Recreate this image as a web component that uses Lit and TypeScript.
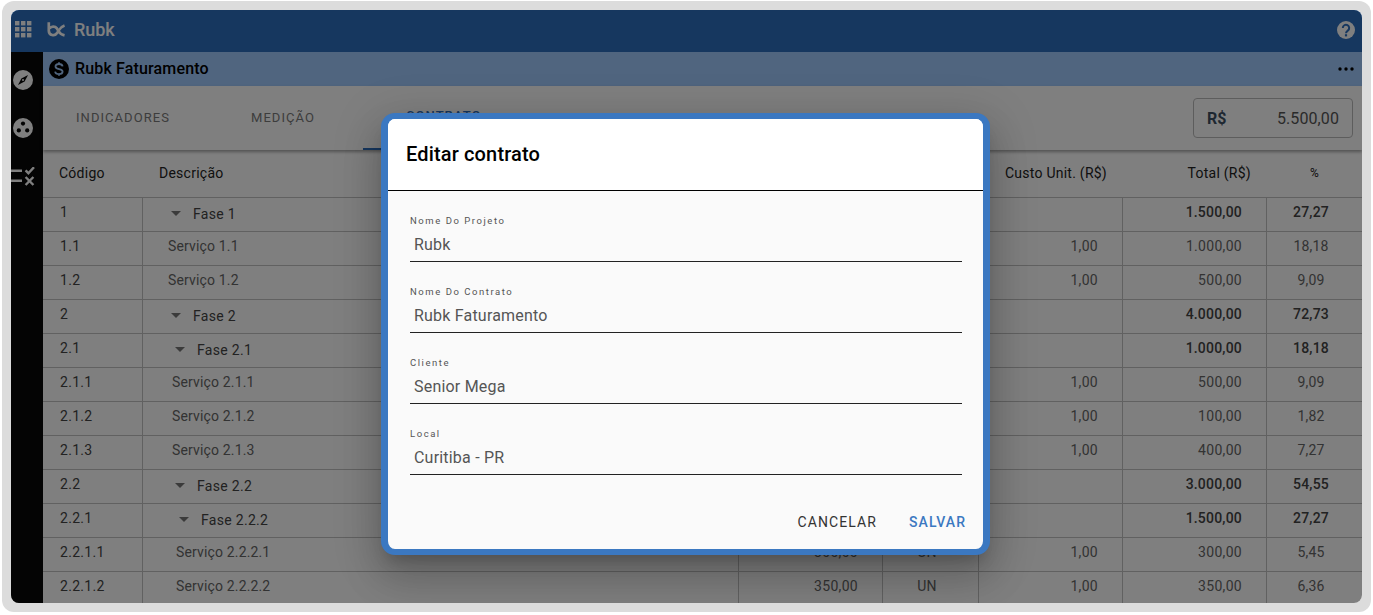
import { LitElement, html, css, svg } from "lit";
import { customElement } from "lit/decorators.js";

type Row = { c: string; d: string; lvl: number; fase: boolean; q?: string; u?: string; cu?: string; t: string; p: string };

const rows: Row[] = [
  { c: "1", d: "Fase 1", lvl: 0, fase: true, t: "1.500,00", p: "27,27" },
  { c: "1.1", d: "Serviço 1.1", lvl: 0, fase: false, q: "1.000,00", u: "UN", cu: "1,00", t: "1.000,00", p: "18,18" },
  { c: "1.2", d: "Serviço 1.2", lvl: 0, fase: false, q: "500,00", u: "UN", cu: "1,00", t: "500,00", p: "9,09" },
  { c: "2", d: "Fase 2", lvl: 0, fase: true, t: "4.000,00", p: "72,73" },
  { c: "2.1", d: "Fase 2.1", lvl: 1, fase: true, t: "1.000,00", p: "18,18" },
  { c: "2.1.1", d: "Serviço 2.1.1", lvl: 1, fase: false, q: "500,00", u: "UN", cu: "1,00", t: "500,00", p: "9,09" },
  { c: "2.1.2", d: "Serviço 2.1.2", lvl: 1, fase: false, q: "100,00", u: "UN", cu: "1,00", t: "100,00", p: "1,82" },
  { c: "2.1.3", d: "Serviço 2.1.3", lvl: 1, fase: false, q: "400,00", u: "UN", cu: "1,00", t: "400,00", p: "7,27" },
  { c: "2.2", d: "Fase 2.2", lvl: 1, fase: true, t: "3.000,00", p: "54,55" },
  { c: "2.2.1", d: "Fase 2.2.2", lvl: 2, fase: true, t: "1.500,00", p: "27,27" },
  { c: "2.2.1.1", d: "Serviço 2.2.2.1", lvl: 2, fase: false, q: "300,00", u: "UN", cu: "1,00", t: "300,00", p: "5,45" },
  { c: "2.2.1.2", d: "Serviço 2.2.2.2", lvl: 2, fase: false, q: "350,00", u: "UN", cu: "1,00", t: "350,00", p: "6,36" },
];

const fields = [
  ["Nome Do Projeto", "Rubk"],
  ["Nome Do Contrato", "Rubk Faturamento"],
  ["Cliente", "Senior Mega"],
  ["Local", "Curitiba - PR"],
];

@customElement("app-root")
export class AppRoot extends LitElement {
  static styles = css`
    :host { display: block; height: 615px; background: #fff; font-family: Roboto, "Liberation Sans", sans-serif; overflow: hidden; }
    .frame { margin: 1px 2px 0; width: 1351px; height: 593px; padding: 9px; background: #dcdcdc; border-radius: 12px; }
    .app { position: relative; width: 1351px; height: 593px; border-radius: 8px; overflow: hidden; display: flex; flex-direction: column; background: #fff; }
    .top { height: 42px; flex: none; box-sizing: border-box; background: #2c6ebe; display: flex; align-items: center; padding: 0 7px 3px 4px; color: #fff; }
    .waffle { display: block; margin-right: 15px; }
    .brand { font-size: 18px; font-weight: 500; margin-left: 9px; letter-spacing: -0.1px; flex: 1; }
    .main { flex: 1; display: flex; min-height: 0; }
    .side { width: 32px; flex: none; box-sizing: border-box; background: #080808; display: flex; flex-direction: column; align-items: flex-start; padding: 18px 0 0 2px; gap: 28px; }
    .side svg { display: block; }
    .side svg:last-child { margin: 1px 0 0 -2px; }
    .content { flex: 1; min-width: 0; background: #fff; display: flex; flex-direction: column; }
    .sub { height: 34px; flex: none; box-sizing: border-box; background: #a0cafe; display: flex; align-items: center; padding: 0 8px 0 6px; color: #000; }
    .sub .title { flex: 1; margin-left: 6px; padding-bottom: 2px; font-size: 16px; font-weight: 500; letter-spacing: 0.15px; }
    .tabs { height: 64px; flex: none; display: flex; align-items: stretch; position: relative; box-shadow: 0 2px 3px rgba(0,0,0,.35); z-index: 1; }
    .tab { flex: none; box-sizing: border-box; display: flex; align-items: center; font-size: 13px; font-weight: 400; letter-spacing: 1.05px; color: #7a7a7a; border-bottom: 2px solid transparent; }
    .tab.a { padding-left: 33px; width: 208px; }
    .tab.b { padding-left: 0; width: 112px; }
    .tab.c { padding: 0 0 3px 43px; width: 200px; color: #2c6ebe; border-bottom-color: #2c6ebe; font-weight: 500; }
    .spacer { flex: 1; }
    .total { align-self: flex-start; margin: 12px 9px 0 0; width: 160px; height: 40px; box-sizing: border-box; border: 1px solid #bbb; border-radius: 4px; display: flex; align-items: center; justify-content: space-between; padding: 0 13px; font-size: 16px; color: #555; letter-spacing: 0.1px; }
    .total b { font-weight: 700; font-size: 16px; color: #3d4f63; }
    .table { flex: 1; min-height: 0; overflow: hidden; font-size: 14px; color: #666; margin-top: 2px; }
    .row { display: grid; grid-template-columns: 100px 596px 144px 96px 144px 144px 95px; height: 34px; box-sizing: border-box; border-bottom: 1px solid #c2c2c2; }
    .head { height: 46px; font-weight: 400; color: #222; }
    .cell { display: flex; align-items: center; border-right: 1px solid #c2c2c2; box-sizing: border-box; min-width: 0; white-space: nowrap; padding-bottom: 6px; }
    .head .cell { border-right: 0; font-size: 14px; letter-spacing: 0.25px; padding-bottom: 4px; color: #222; }
    .cell:last-child { border-right: 0; }
    .code { padding: 0 0 6px 17px; color: #444; letter-spacing: 0.3px; }
    .head .code { padding-left: 16px; }
    .desc { padding-left: 25px; letter-spacing: 0.15px; }
    .head .desc { padding-left: 16px; }
    .num { justify-content: flex-end; padding-right: 24px; letter-spacing: 0.3px; }
    .head .num { padding-right: 16px; }
    .ctr { justify-content: center; letter-spacing: 0.2px; padding-right: 7px; }
    .head .ctr { padding-right: 0; font-size: 12px; }
    .fase .desc { padding-bottom: 2px; font-weight: 400; color: #444; letter-spacing: 0.3px; }
    .fase .num, .fase .ctr { font-weight: 500; color: #444; letter-spacing: 0.2px; }
    .caret { width: 0; height: 0; border-left: 5px solid transparent; border-right: 5px solid transparent; border-top: 5px solid #777; margin-right: 12px; flex: none; }
    .overlay { position: absolute; inset: 0; background: rgba(0,0,0,.5); z-index: 5; }
    .dialog { position: absolute; left: 370px; top: 103px; width: 609px; height: 442px; box-sizing: border-box; border-style: solid; border-color: #3b78c1; border-width: 6px 7px; border-radius: 14px; background: #fafafa; z-index: 6; display: flex; flex-direction: column; overflow: hidden; box-shadow: 0 11px 15px -7px rgba(0,0,0,.2), 0 24px 38px 3px rgba(0,0,0,.14), 0 9px 46px 8px rgba(0,0,0,.12); }
    .dhead { height: 71px; flex: none; box-sizing: border-box; background: #fff; display: flex; align-items: center; padding: 0 18px 2px; font-size: 20px; font-weight: 500; color: #000; letter-spacing: 0.15px; }
    .rule { height: 1px; background: #000; flex: none; }
    .dbody { flex: 1; padding: 23px 21px 0 22px; display: flex; flex-direction: column; gap: 23px; }
    .field { height: 48px; box-sizing: border-box; border-bottom: 1px solid #222; }
    .field label { display: block; font-size: 9.5px; letter-spacing: 1.55px; color: #555; line-height: 14px; }
    .field div { font-size: 16px; color: #555; padding: 5px 0 0 4px; line-height: 24px; letter-spacing: 0.2px; }
    .actions { height: 56px; flex: none; box-sizing: border-box; display: flex; justify-content: flex-end; align-items: center; padding: 2px 17px 0 0; gap: 32px; font-size: 14px; font-weight: 400; letter-spacing: 1.1px; }
    .actions span:first-child { color: #333; }
    .actions span:last-child { color: #3b78c1; font-weight: 500; letter-spacing: 1.05px; }
  `;

  private waffle() {
    const dots = [0, 1, 2].flatMap((y) => [0, 1, 2].map((x) => svg`<rect x=${x * 6} y=${y * 6} width="4.4" height="4.4"></rect>`));
    return html`<svg class="waffle" width="17" height="17" viewBox="0 0 17 17" fill="#fff">${dots}</svg>`;
  }

  private renderRow(r: Row) {
    return html`<div class="row ${r.fase ? "fase" : ""}">
      <div class="cell code">${r.c}</div>
      <div class="cell desc" style="padding-left:${(r.fase ? 28 : 25) + r.lvl * 4}px">
        ${r.fase ? html`<span class="caret"></span>` : ""}${r.d}
      </div>
      <div class="cell num">${r.q ?? ""}</div>
      <div class="cell ctr">${r.u ?? ""}</div>
      <div class="cell num">${r.cu ?? ""}</div>
      <div class="cell num">${r.t}</div>
      <div class="cell ctr">${r.p}</div>
    </div>`;
  }

  render() {
    return html`<div class="frame"><div class="app">
      <div class="top">
        ${this.waffle()}
        <svg width="18" height="15" viewBox="0 0 20 16" fill="none" stroke="#fff" stroke-width="3">
          <path d="M2 0V9.5A5 5 0 0 0 11.2 12L13 9Q15 5.2 19.5 3.6"/>
          <path d="M2.8 7A5 5 0 0 1 11 6.8L13 10Q15 13.6 19.5 14.6"/>
        </svg>
        <span class="brand">Rubk</span>
        <svg width="18" height="18" viewBox="0 0 18 18">
          <circle cx="9" cy="9" r="9" fill="#fff"/>
          <path d="M5.8 7a3.2 3.2 0 1 1 5 2.6C9.7 10.4 9 10.9 9 12.2" fill="none" stroke="#2c6ebe" stroke-width="2"/>
          <rect x="7.9" y="13.2" width="2.2" height="2.2" fill="#2c6ebe"/>
        </svg>
      </div>
      <div class="main">
        <div class="side">
          <svg width="20" height="20" viewBox="0 0 20 20"><circle cx="10" cy="10" r="10" fill="#fff"/><path d="M15 5l-3.4 6.6L5 15l3.4-6.6z" fill="#080808"/><circle cx="10" cy="10" r="1" fill="#fff"/></svg>
          <svg width="20" height="20" viewBox="0 0 20 20"><circle cx="10" cy="10" r="10" fill="#fff"/><circle cx="10" cy="5.6" r="2.1" fill="#080808"/><circle cx="5.8" cy="12.4" r="2.1" fill="#080808"/><circle cx="14.2" cy="12.4" r="2.1" fill="#080808"/></svg>
          <svg width="24" height="20" viewBox="0 0 24 20" fill="none" stroke="#fff" stroke-width="2.4"><path d="M0 3.7h11M0 13.7h11" /><path d="M14.6 3.4l2.8 2.8 5.6-6" /><path d="M14.6 10l7.8 8M22.4 10L14.6 18" /></svg>
        </div>
        <div class="content">
          <div class="sub">
            <svg width="20" height="20" viewBox="0 0 20 20"><circle cx="10" cy="10" r="10" fill="#000"/><path d="M13.6 7.4c-.3-1.6-1.7-2.4-3.6-2.4-2 0-3.5 1-3.5 2.6 0 3.6 7.1 1.6 7.1 5 0 1.7-1.6 2.6-3.6 2.6s-3.6-1-3.9-2.6M10 3.2v1.8M10 15v1.8" fill="none" stroke="#a0cafe" stroke-width="1.8"/></svg>
            <span class="title">Rubk Faturamento</span>
            <svg width="16" height="4" viewBox="0 0 16 4" fill="#000"><circle cx="2" cy="2" r="1.7"/><circle cx="8" cy="2" r="1.7"/><circle cx="14" cy="2" r="1.7"/></svg>
          </div>
          <div class="tabs">
            <div class="tab a">INDICADORES</div>
            <div class="tab b">MEDIÇÃO</div>
            <div class="tab c">CONTRATO</div>
            <div class="spacer"></div>
            <div class="total"><b>R$</b><span>5.500,00</span></div>
          </div>
          <div class="table">
            <div class="row head">
              <div class="cell code">Código</div>
              <div class="cell desc">Descrição</div>
              <div class="cell num">Quantidade</div>
              <div class="cell ctr">Unidade</div>
              <div class="cell num">Custo Unit. (R$)</div>
              <div class="cell num">Total (R$)</div>
              <div class="cell ctr">%</div>
            </div>
            ${rows.map((r) => this.renderRow(r))}
          </div>
        </div>
      </div>
      <div class="overlay"></div>
      <div class="dialog">
        <div class="dhead">Editar contrato</div>
        <div class="rule"></div>
        <div class="dbody">
          ${fields.map(([l, v]) => html`<div class="field"><label>${l}</label><div>${v}</div></div>`)}
        </div>
        <div class="actions"><span>CANCELAR</span><span>SALVAR</span></div>
      </div>
    </div></div>`;
  }
}
